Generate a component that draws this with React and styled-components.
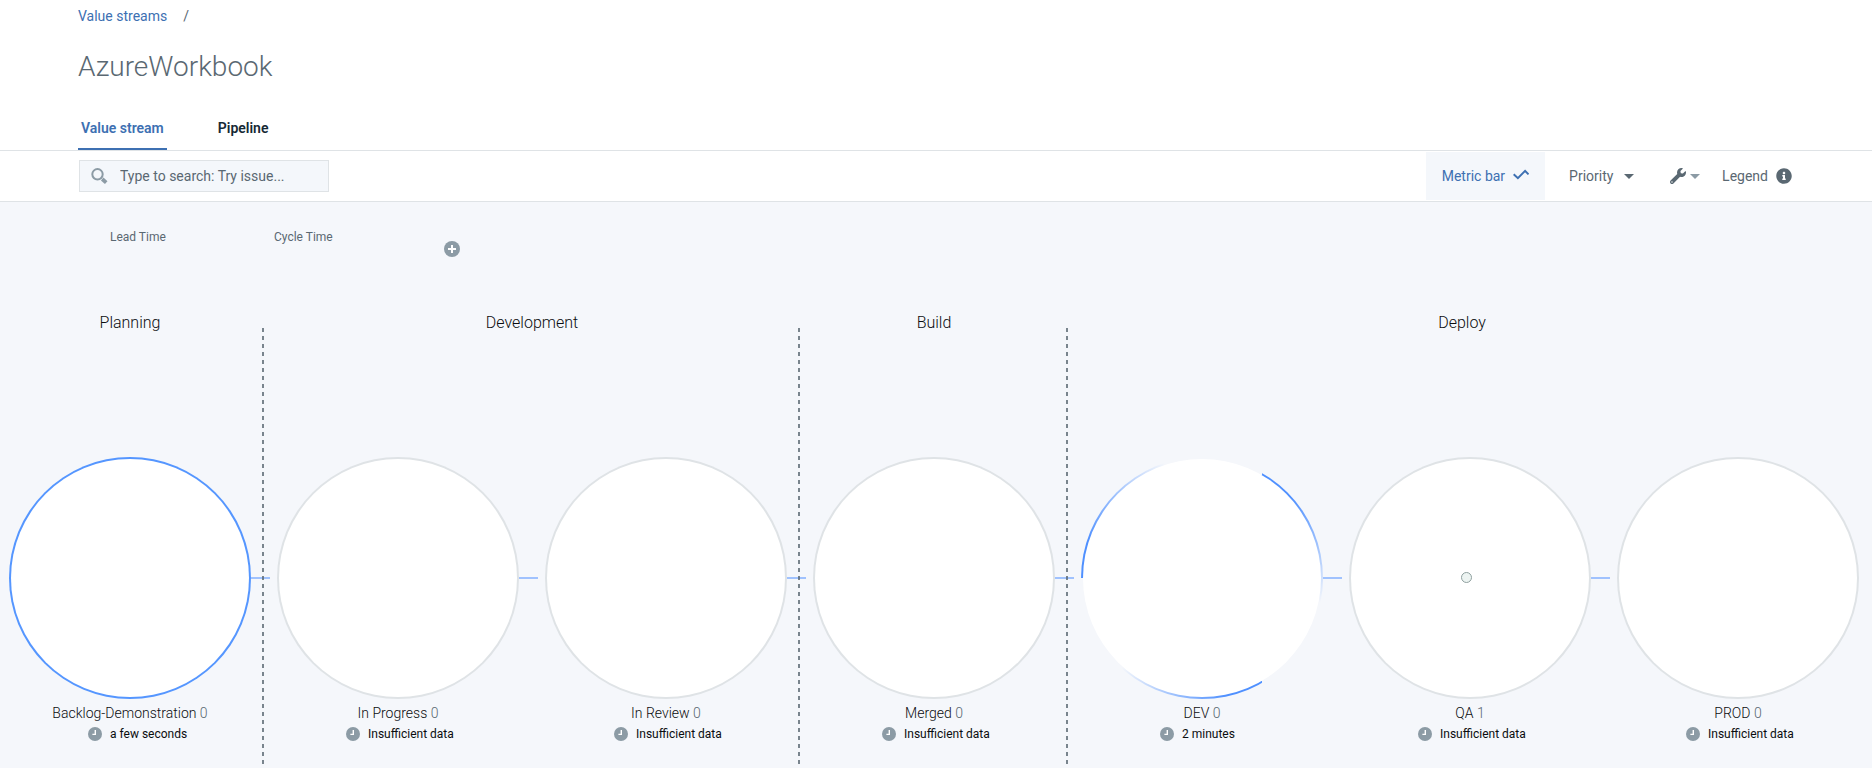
import React from "react";
import styled, { createGlobalStyle, css } from "styled-components";
import { FaInfoCircle, FaWrench } from "react-icons/fa";

const color = {
  blue: "#3d70b2",
  brightBlue: "#5596ff",
  connector: "#a0c2fe",
  ink: "#152935",
  text: "#0b0d0f",
  muted: "#5a6872",
  icon: "#8c9ba5",
  line: "#dfe3e6",
  field: "#f4f7fb",
  canvas: "#f5f7fb",
};

const GlobalStyle = createGlobalStyle`
  *, *::before, *::after { box-sizing: border-box; }
  body {
    margin: 0;
    font-family: Roboto, "Liberation Sans", sans-serif;
    font-size: 14px;
    line-height: 20px;
    color: ${color.muted};
    background: #fff;
  }
  button, input, select {
    font: inherit;
    color: inherit;
    margin: 0;
    padding: 0;
    border: 0;
    border-radius: 0;
    background: none;
  }
  button, select { cursor: pointer; }
`;

const Page = styled.div`
  display: flex;
  flex-direction: column;
  min-height: 100vh;
`;

const Header = styled.header`
  padding: 6px 78px 0;
  border-bottom: 1px solid ${color.line};
`;

const Breadcrumb = styled.nav`
  display: flex;
  gap: 16px;
`;

const BreadcrumbLink = styled.a`
  color: ${color.blue};
  text-decoration: none;
`;

const Title = styled.h1`
  margin: 23px 0 33px;
  font-size: 28px;
  line-height: 36px;
  font-weight: 300;
`;

const Tabs = styled.nav`
  display: flex;
  gap: 48px;
`;

const Tab = styled.a`
  padding: 0 3px 10px;
  border-bottom: 2px solid ${(p) => (p.$active ? color.blue : "transparent")};
  color: ${(p) => (p.$active ? color.blue : color.ink)};
  font-weight: 600;
  text-decoration: none;
`;

const Toolbar = styled.div`
  display: flex;
  align-items: center;
  justify-content: space-between;
  height: 51px;
  padding: 0 80px 0 79px;
  border-bottom: 1px solid ${color.line};
`;

const SearchBox = styled.label`
  display: flex;
  align-items: center;
  gap: 12px;
  width: 250px;
  height: 32px;
  padding: 0 11px;
  border: 1px solid ${color.line};
  background: ${color.field};
`;

const SearchInput = styled.input`
  flex: 1;
  min-width: 0;
  outline: none;
  &::placeholder {
    color: ${color.muted};
    opacity: 1;
  }
`;

const Actions = styled.div`
  display: flex;
  align-items: center;
  height: 48px;
`;

const MetricToggle = styled.button`
  display: flex;
  align-items: center;
  gap: 8px;
  height: 48px;
  padding: 0 16px;
  color: ${color.blue};
  background: ${color.field};
`;

const PriorityField = styled.label`
  display: flex;
  align-items: center;
  gap: 10px;
  padding: 0 36px 0 24px;
`;

const PrioritySelect = styled.select`
  appearance: none;
  outline: none;
`;

const ToolButton = styled.button`
  display: flex;
  align-items: center;
  gap: 4px;
  margin-right: 22px;
`;

const LegendButton = styled.button`
  display: flex;
  align-items: center;
  gap: 8px;
`;

const Canvas = styled.main`
  flex: 1;
  overflow: hidden;
  background: ${color.canvas};
`;

const MetricBar = styled.div`
  display: flex;
  height: 55px;
  padding: 27px 110px 0;
`;

const Metric = styled.div`
  width: 164px;
  font-size: 12px;
  line-height: 16px;
`;

const AddButton = styled.button`
  display: flex;
  align-self: flex-end;
  margin-left: 6px;
`;

const Stream = styled.div`
  display: flex;
  margin: 56px 0 0 -4px;
`;

const Group = styled.section`
  position: relative;
  flex: ${(p) => p.$span} 1 0;
  min-width: 0;
  padding-bottom: 26px;

  &:not(:last-child)::after {
    content: "";
    position: absolute;
    top: 15px;
    right: 0;
    bottom: 4px;
    width: 2px;
    background: repeating-linear-gradient(#5a6872cc 0 4px, transparent 4px 8px);
  }
`;

const GroupTitle = styled.h2`
  margin: 0 0 124px;
  font-size: 16px;
  line-height: 20px;
  font-weight: 300;
  text-align: center;
  color: ${color.text};

  ${Group}:last-child & {
    padding-right: 16px;
  }
`;

const Stages = styled.div`
  display: flex;
`;

const Stage = styled.article`
  flex: 1 1 0;
  min-width: 0;
  display: flex;
  flex-direction: column;
  align-items: center;
`;

const ringStyles = {
  idle: css`
    background: ${color.line};
  `,
  active: css`
    background: ${color.brightBlue};
  `,
  running: css`
    background: repeating-conic-gradient(
      from 30deg,
      #4f90ff 0deg 18deg,
      #4f90ff00 72deg 120deg
    );
  `,
};

const Ring = styled.div`
  position: relative;
  width: calc(100% - 26px);
  aspect-ratio: 1;
  padding: 2px;
  border-radius: 50%;
  ${(p) => ringStyles[p.$state]}

  &::after {
    content: "";
    position: absolute;
    top: calc(50% - 1px);
    left: 100%;
    width: 19px;
    height: 2px;
    background: ${(p) => (p.$last ? "none" : color.connector)};
  }
`;

const Disc = styled.div`
  position: relative;
  height: 100%;
  border-radius: 50%;
  background: #fff;
`;

const IssueDot = styled.span`
  position: absolute;
  top: calc(50% - 6px);
  left: calc(50% - 9px);
  width: 11px;
  height: 11px;
  border: 1px solid #8fa09f;
  border-radius: 50%;
  background: #edf4f2;
`;

const StageName = styled.h3`
  margin: 4px 0 3px;
  font-size: 14px;
  line-height: 20px;
  font-weight: 300;
  white-space: nowrap;
  color: ${color.text};
`;

const Count = styled.span`
  color: ${color.muted};
`;

const Duration = styled.div`
  display: flex;
  align-items: center;
  gap: 8px;
  width: ${(p) => (p.$known ? "84px" : "104px")};
  font-size: 12px;
  line-height: 16px;
  white-space: nowrap;
  color: ${color.text};

  svg { flex: none; }
`;

const SearchIcon = () => (
  <svg width="17" height="16" viewBox="0 0 17 16" aria-hidden="true">
    <circle cx="6.5" cy="6.3" r="5.2" fill="none" stroke={color.icon} strokeWidth="2" />
    <path d="M11.2 11l4 3.6" stroke={color.icon} strokeWidth="3.8" />
  </svg>
);

const CheckIcon = () => (
  <svg width="16" height="16" viewBox="0 0 16 16" fill="none" aria-hidden="true">
    <path d="M.7 6.2l4.2 4 7.2-7.3 3.4 3.5" stroke={color.blue} strokeWidth="2" />
  </svg>
);

const Caret = ({ fill }) => (
  <svg width="10" height="5" viewBox="0 0 10 5" aria-hidden="true">
    <path d="M0 0h10L5 5z" fill={fill} />
  </svg>
);

const PlusIcon = () => (
  <svg width="16" height="16" viewBox="0 0 16 16" aria-hidden="true">
    <circle cx="8" cy="8" r="8" fill={color.icon} />
    <path d="M8 4v8M4 8h8" stroke="#fff" strokeWidth="2" />
  </svg>
);

const ClockIcon = () => (
  <svg width="14" height="14" viewBox="0 0 14 14" aria-hidden="true">
    <circle cx="7" cy="7" r="7" fill={color.icon} />
    <path d="M7.3 3v4.4H4.4" fill="none" stroke="#fff" strokeWidth="1.4" />
  </svg>
);

const groups = [
  {
    name: "Planning",
    stages: [
      { name: "Backlog-Demonstration", count: 0, time: "a few seconds", state: "active" },
    ],
  },
  {
    name: "Development",
    stages: [
      { name: "In Progress", count: 0 },
      { name: "In Review", count: 0 },
    ],
  },
  { name: "Build", stages: [{ name: "Merged", count: 0 }] },
  {
    name: "Deploy",
    stages: [
      { name: "DEV", count: 0, time: "2 minutes", state: "running" },
      { name: "QA", count: 1 },
      { name: "PROD", count: 0, last: true },
    ],
  },
];

export default function App() {
  return (
    <Page>
      <GlobalStyle />
      <Header>
        <Breadcrumb aria-label="Breadcrumb">
          <BreadcrumbLink href="#streams">Value streams</BreadcrumbLink>
          <span>/</span>
        </Breadcrumb>
        <Title>AzureWorkbook</Title>
        <Tabs aria-label="Views">
          <Tab href="#value-stream" $active aria-current="page">Value stream</Tab>
          <Tab href="#pipeline">Pipeline</Tab>
        </Tabs>
      </Header>

      <Toolbar>
        <SearchBox>
          <SearchIcon />
          <SearchInput type="text" aria-label="Search issues" placeholder="Type to search: Try issue..." />
        </SearchBox>
        <Actions>
          <MetricToggle type="button" aria-pressed="true">
            Metric bar
            <CheckIcon />
          </MetricToggle>
          <PriorityField>
            <PrioritySelect aria-label="Group by">
              <option>Priority</option>
            </PrioritySelect>
            <Caret fill={color.muted} />
          </PriorityField>
          <ToolButton type="button" aria-label="Settings">
            <FaWrench size={16} />
            <Caret fill={color.icon} />
          </ToolButton>
          <LegendButton type="button">
            Legend
            <FaInfoCircle size={16} />
          </LegendButton>
        </Actions>
      </Toolbar>

      <Canvas>
        <MetricBar>
          <Metric>Lead Time</Metric>
          <Metric>Cycle Time</Metric>
          <AddButton type="button" aria-label="Add metric">
            <PlusIcon />
          </AddButton>
        </MetricBar>

        <Stream>
          {groups.map((group) => (
            <Group key={group.name} $span={group.stages.length}>
              <GroupTitle>{group.name}</GroupTitle>
              <Stages>
                {group.stages.map((stage) => (
                  <Stage key={stage.name}>
                    <Ring $state={stage.state || "idle"} $last={stage.last}>
                      <Disc>{stage.count > 0 && <IssueDot />}</Disc>
                    </Ring>
                    <StageName>
                      {stage.name} <Count>{stage.count}</Count>
                    </StageName>
                    <Duration $known={Boolean(stage.time)}>
                      <ClockIcon />
                      {stage.time || "Insufficient data"}
                    </Duration>
                  </Stage>
                ))}
              </Stages>
            </Group>
          ))}
        </Stream>
      </Canvas>
    </Page>
  );
}
